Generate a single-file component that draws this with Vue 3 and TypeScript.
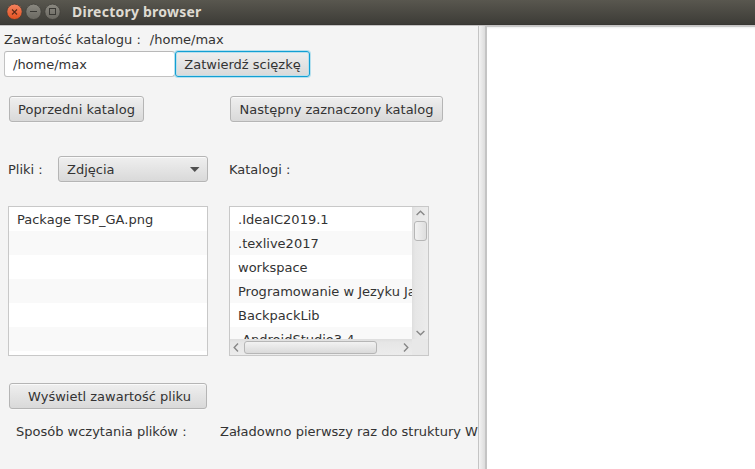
<script setup lang="ts">
import { ref } from 'vue'

const path = ref<string>('/home/max')
const files: string[] = ['Package TSP_GA.png', '', '', '', '', '', '']
const folders: string[] = [
  '.IdeaIC2019.1',
  '.texlive2017',
  'workspace',
  'Programowanie w Jezyku Java',
  'BackpackLib',
  '.AndroidStudio3.4',
]
</script>

<template>
  <div class="window">
    <header class="titlebar">
      <svg class="controls" width="60" height="18" viewBox="0 0 60 18">
        <defs>
          <linearGradient id="close-fill" x1="0" y1="0" x2="0" y2="1">
            <stop offset="0" stop-color="#f58460" />
            <stop offset="1" stop-color="#e2501f" />
          </linearGradient>
          <linearGradient id="grey-fill" x1="0" y1="0" x2="0" y2="1">
            <stop offset="0" stop-color="#8b8981" />
            <stop offset="1" stop-color="#6a6861" />
          </linearGradient>
        </defs>
        <circle cx="10.5" cy="8.800" r="7.700" fill="url(#close-fill)" stroke="#3f3b35" stroke-width=".8" />
        <circle cx="29.5" cy="8.800" r="7.700" fill="url(#grey-fill)" stroke="#3f3e39" stroke-width=".8" />
        <circle cx="48.5" cy="8.800" r="7.700" fill="url(#grey-fill)" stroke="#3f3e39" stroke-width=".8" />
        <path d="M8 6.5l5 5M13 6.5l-5 5" stroke="#5b2a18" stroke-width="1.1" fill="none" />
        <path d="M26 8.500h7" stroke="#3a3935" stroke-width="1" />
        <rect x="45.5" y="5.500" width="6" height="6" stroke="#3a3935" fill="none" />
      </svg>
      <span class="title">Directory browser</span>
    </header>
    <div class="split">
      <main class="pane">
        <div class="heading"><span>Zawartość katalogu :</span><span>/home/max</span></div>
        <div class="path-row">
          <input v-model="path" class="field" type="text" />
          <button class="btn focused">Zatwierdź scięzkę</button>
        </div>
        <div class="nav-row">
          <button class="btn prev">Poprzedni katalog</button>
          <button class="btn next">Następny zaznaczony katalog</button>
        </div>
        <div class="label-row">
          <span class="row-label files-label">Pliki :</span>
          <button class="btn combo">
            <span>Zdjęcia</span>
            <svg width="10" height="5" viewBox="0 0 10 5"><path d="M0 0h9.500L4.750 5z" fill="#505050" /></svg>
          </button>
          <span class="row-label">Katalogi :</span>
        </div>
        <div class="lists">
          <div class="list">
            <div v-for="(file, i) in files" :key="i" class="cell">{{ file }}</div>
          </div>
          <div class="list scrollable">
            <div class="viewport">
              <div v-for="folder in folders" :key="folder" class="cell">{{ folder }}</div>
            </div>
            <div class="vbar">
              <svg width="9" height="6" viewBox="0 0 9 6"><path d="M.6 5l3.900-3.800L8.400 5" /></svg>
              <div class="vthumb"></div>
              <svg class="down" width="9" height="6" viewBox="0 0 9 6"><path d="M.6 1l3.900 3.800L8.400 1" /></svg>
            </div>
            <div class="hbar">
              <svg width="6" height="9" viewBox="0 0 6 9"><path d="M5 .6L1.200 4.500L5 8.400" /></svg>
              <div class="hthumb"></div>
              <svg class="right" width="6" height="9" viewBox="0 0 6 9"><path d="M1 .6l3.800 3.900L1 8.400" /></svg>
            </div>
            <div class="corner"></div>
          </div>
        </div>
        <button class="btn show">Wyświetl zawartość pliku</button>
        <div class="status">
          <span class="status-label">Sposób wczytania plików :</span>
          <span>Załadowno pierwszy raz do struktury W</span>
        </div>
      </main>
      <div class="divider"></div>
      <section class="preview"></section>
    </div>
  </div>
</template>

<style>
body {
  margin: 0;
  overflow: hidden;
}
</style>

<style scoped>
.window {
  width: 755px;
  height: 469px;
  display: flex;
  flex-direction: column;
  background: #f4f4f4;
  color: #333;
  font: 13px/16px "DejaVu Sans", sans-serif;
  white-space: nowrap;
  overflow: hidden;
}
.titlebar {
  height: 25px;
  flex: none;
  box-sizing: border-box;
  display: flex;
  align-items: center;
  padding: 0 0 1px 4px;
  background: linear-gradient(#59574f, #3d3c37);
  border-bottom: 1px solid #383733;
}
.title {
  margin-left: 8px;
  color: #dfdbd2;
  font: bold 14px/20px "Noto Sans", sans-serif;
  letter-spacing: 0.23px;
}
.split {
  flex: 1;
  display: flex;
  min-height: 0;
  border-top: 1px solid #c5c3c3;
}
.pane {
  width: 478px;
  flex: none;
  overflow: hidden;
}
.divider {
  width: 9px;
  flex: none;
  box-sizing: border-box;
  border-left: 1px solid #c4c4c4;
  border-right: 2px solid #c4c4c4;
  background: linear-gradient(90deg, #f3f3f3, #dcdcdc);
}
.preview {
  flex: 1;
  background: #fff;
  box-shadow: inset 0 1px #c8c8c8, inset 0 3px 2px -1px #eee;
}
.heading {
  display: flex;
  gap: 9px;
  padding: 6px 0 0 4px;
  height: 19px;
}
.path-row {
  display: flex;
  padding-left: 4px;
}
.field {
  width: 171px;
  height: 26px;
  box-sizing: border-box;
  border: 1px solid #c2c2c2;
  border-top-color: #b8b8b8;
  border-radius: 3px;
  background: #fff;
  padding: 0 8px;
  color: #333;
  font: inherit;
  outline: none;
}
.btn {
  box-sizing: border-box;
  height: 26px;
  padding: 2px 0 0;
  border: 1px solid #b5b5b5;
  border-radius: 3px;
  background: linear-gradient(#efefef, #d9d9d9);
  box-shadow: inset 0 1px #fafafa, 0 1px #f8f8f8;
  color: #333;
  font: inherit;
  text-align: center;
}
.focused {
  width: 135px;
  border-color: #129fd3;
  box-shadow: inset 0 0 0 1px #b9dfec, 0 0 0 1px #b5e0ee;
}
.nav-row {
  display: flex;
  padding: 19px 0 0 9px;
}
.prev {
  width: 135px;
  margin-right: 86px;
  letter-spacing: 0.05px;
}
.next {
  width: 213px;
}
.label-row {
  display: flex;
  align-items: center;
  padding: 34px 0 0 8px;
}
.row-label {
  padding-top: 2px;
}
.files-label {
  width: 50px;
}
.combo {
  width: 150px;
  margin-right: 21px;
  display: flex;
  align-items: center;
  justify-content: space-between;
  padding: 2px 7px 0 8px;
}
.combo svg {
  margin-bottom: 2px;
}
.lists {
  display: flex;
  gap: 21px;
  padding: 24px 0 0 8px;
}
.list {
  width: 200px;
  height: 150px;
  box-sizing: border-box;
  border: 1px solid #c8c8c8;
  background: #fff;
  overflow: hidden;
}
.cell {
  height: 24px;
  padding-left: 8px;
  line-height: 25px;
}
.cell:nth-child(even) {
  background: #f9f9f9;
}
.scrollable {
  display: grid;
  grid-template: 132px 16px / 182px 16px;
}
.viewport {
  overflow: hidden;
}
.vbar {
  display: flex;
  flex-direction: column;
  align-items: center;
  box-sizing: border-box;
  padding: 3px 0;
  background: linear-gradient(90deg, #dedede, #e6e6e6 20%, #ececec);
}
.vbar path,
.hbar path {
  fill: none;
  stroke: #878787;
  stroke-width: 1.4;
}
.vthumb {
  width: 13px;
  height: 20px;
  margin-top: 5px;
  box-sizing: border-box;
  border: 1px solid #b6b6b6;
  border-radius: 3px;
  background: linear-gradient(90deg, #f2f2f2, #dedede);
}
.down {
  margin-top: auto;
}
.hbar {
  display: flex;
  align-items: center;
  padding: 0 3px;
  background: linear-gradient(#dedede, #e6e6e6 20%, #ececec);
}
.hthumb {
  width: 133px;
  height: 13px;
  margin-left: 5px;
  box-sizing: border-box;
  border: 1px solid #b6b6b6;
  border-radius: 3px;
  background: linear-gradient(#f2f2f2, #dadada);
}
.right {
  margin-left: auto;
}
.corner {
  background: #e8e8e8;
}
.show {
  display: block;
  width: 198px;
  margin: 27px 0 0 9px;
  padding-left: 3px;
}
.status {
  display: flex;
  padding: 15px 0 0 16px;
}
.status-label {
  width: 204px;
}
</style>
